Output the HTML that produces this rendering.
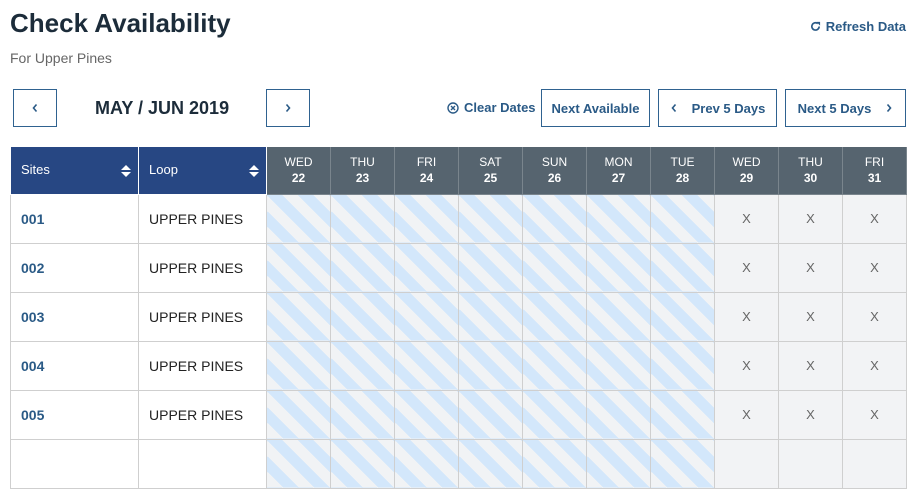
<!DOCTYPE html>
<html><head><style>
*{box-sizing:border-box;margin:0;padding:0}
body{width:916px;height:442px;overflow:hidden;background:#fff;font-family:"Liberation Sans",sans-serif;color:#1b2a37;position:relative}
.a{position:absolute}
h1{position:absolute;left:10px;top:8px;font-size:26px;font-weight:bold;color:#1c2c3a;letter-spacing:0}
.sub{left:10px;top:50px;font-size:14px;color:#666}
.btn{position:absolute;border:1px solid #2f6290;height:38px;top:89px;color:#2a5a86;font-size:13px;font-weight:bold;display:flex;align-items:center;justify-content:center;background:#fff;gap:14px}
.btn svg{width:8px;height:10px}
table{position:absolute;left:10px;top:147px;border-collapse:collapse;table-layout:fixed}
td,th{border:1px solid #cfcfcf;height:49px;font-size:14px}
th{height:47px;color:#fff;font-weight:normal;font-size:12px;border-color:#fff;border-top:none;line-height:16px}
th.b{background:#274783;text-align:left;padding-left:10px;font-size:13px;position:relative}
th.g{background:#56646f;text-align:center;border-color:#7a858d}
th.g b{font-weight:bold}
td.s{color:#2a5a86;font-weight:bold;padding-left:10px}
td.l{padding-left:10px;color:#222}
td.st{background:repeating-linear-gradient(45deg,#f1f3f5 0 11px,#d3e7fb 11px 22px)}
td.x{background:#f2f3f5;text-align:center;color:#666;font-size:13px}
.sort{position:absolute;right:12px;top:18px;width:0;height:0}
.sort:before{content:"";position:absolute;left:-5px;top:0;border:5px solid transparent;border-top:none;border-bottom:5px solid #fff}
.sort:after{content:"";position:absolute;left:-5px;top:7px;border:5px solid transparent;border-bottom:none;border-top:5px solid #fff}
</style></head><body>
<h1>Check Availability</h1>
<div class="a sub">For Upper Pines</div>
<div class="a" style="right:10px;top:19px;font-size:13px;font-weight:bold;color:#2a5a86"><svg width="11" height="11" viewBox="0 0 12 12" style="vertical-align:-1px;margin-right:5px"><path d="M10 6A4 4 0 1 1 8.5 2.8" fill="none" stroke="#2a5a86" stroke-width="1.8"/><path d="M7 1h4v4z" fill="#2a5a86"/></svg>Refresh Data</div>
<div class="btn" style="left:13px;width:44px"><svg viewBox="0 0 8 10"><path d="M5.5 1.5L2.5 5l3 3.5" fill="none" stroke="#2a5a86" stroke-width="1.6"/></svg></div>
<div class="a" style="left:95px;top:98px;font-size:18px;font-weight:bold;color:#1c2c3a">MAY / JUN 2019</div>
<div class="btn" style="left:266px;width:44px"><svg viewBox="0 0 8 10"><path d="M2.5 1.5L5.5 5l-3 3.5" fill="none" stroke="#2a5a86" stroke-width="1.6"/></svg></div>
<div class="a" style="left:447px;top:100px;font-size:13px;font-weight:bold;color:#2a5a86"><svg width="12" height="12" viewBox="0 0 12 12" style="vertical-align:-2px;margin-right:5px"><circle cx="6" cy="6" r="5" fill="none" stroke="#2a5a86" stroke-width="1.4"/><path d="M4 4l4 4M8 4l-4 4" stroke="#2a5a86" stroke-width="1.4"/></svg>Clear Dates</div>
<div class="btn" style="left:541px;width:109px">Next Available</div>
<div class="btn" style="left:658px;width:119px"><svg viewBox="0 0 8 10"><path d="M5.5 1.5L2.5 5l3 3.5" fill="none" stroke="#2a5a86" stroke-width="1.6"/></svg>Prev 5 Days</div>
<div class="btn" style="left:785px;width:121px">Next 5 Days<svg viewBox="0 0 8 10"><path d="M2.5 1.5L5.5 5l-3 3.5" fill="none" stroke="#2a5a86" stroke-width="1.6"/></svg></div>
<table>
<colgroup><col style="width:128px"><col style="width:128px"><col style="width:64px"><col style="width:64px"><col style="width:64px"><col style="width:64px"><col style="width:64px"><col style="width:64px"><col style="width:64px"><col style="width:64px"><col style="width:64px"><col style="width:64px"></colgroup>
<tr><th class="b">Sites<span class="sort"></span></th><th class="b">Loop<span class="sort"></span></th>
<th class="g">WED<br><b>22</b></th><th class="g">THU<br><b>23</b></th><th class="g">FRI<br><b>24</b></th><th class="g">SAT<br><b>25</b></th><th class="g">SUN<br><b>26</b></th><th class="g">MON<br><b>27</b></th><th class="g">TUE<br><b>28</b></th><th class="g">WED<br><b>29</b></th><th class="g">THU<br><b>30</b></th><th class="g">FRI<br><b>31</b></th></tr>
<tr><td class="s">001</td><td class="l">UPPER PINES</td><td class="st"></td><td class="st"></td><td class="st"></td><td class="st"></td><td class="st"></td><td class="st"></td><td class="st"></td><td class="x">X</td><td class="x">X</td><td class="x">X</td></tr>
<tr><td class="s">002</td><td class="l">UPPER PINES</td><td class="st"></td><td class="st"></td><td class="st"></td><td class="st"></td><td class="st"></td><td class="st"></td><td class="st"></td><td class="x">X</td><td class="x">X</td><td class="x">X</td></tr>
<tr><td class="s">003</td><td class="l">UPPER PINES</td><td class="st"></td><td class="st"></td><td class="st"></td><td class="st"></td><td class="st"></td><td class="st"></td><td class="st"></td><td class="x">X</td><td class="x">X</td><td class="x">X</td></tr>
<tr><td class="s">004</td><td class="l">UPPER PINES</td><td class="st"></td><td class="st"></td><td class="st"></td><td class="st"></td><td class="st"></td><td class="st"></td><td class="st"></td><td class="x">X</td><td class="x">X</td><td class="x">X</td></tr>
<tr><td class="s">005</td><td class="l">UPPER PINES</td><td class="st"></td><td class="st"></td><td class="st"></td><td class="st"></td><td class="st"></td><td class="st"></td><td class="st"></td><td class="x">X</td><td class="x">X</td><td class="x">X</td></tr>
<tr><td class="s"></td><td class="l"></td><td class="st"></td><td class="st"></td><td class="st"></td><td class="st"></td><td class="st"></td><td class="st"></td><td class="st"></td><td class="x"></td><td class="x"></td><td class="x"></td></tr>
</table>
</body></html>
